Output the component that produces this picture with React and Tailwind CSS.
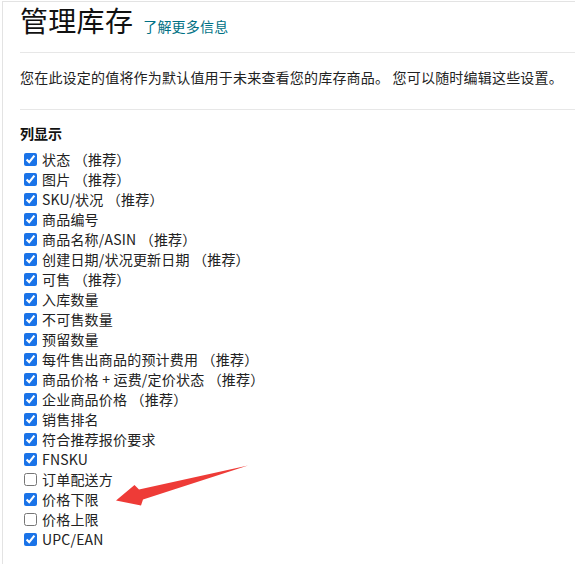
import React from 'react';

const columns = [
  { label: '状态 （推荐）', checked: true },
  { label: '图片 （推荐）', checked: true },
  { label: 'SKU/状况 （推荐）', checked: true },
  { label: '商品编号', checked: true },
  { label: '商品名称/ASIN （推荐）', checked: true },
  { label: '创建日期/状况更新日期 （推荐）', checked: true },
  { label: '可售 （推荐）', checked: true },
  { label: '入库数量', checked: true },
  { label: '不可售数量', checked: true },
  { label: '预留数量', checked: true },
  { label: '每件售出商品的预计费用 （推荐）', checked: true },
  { label: '商品价格 + 运费/定价状态 （推荐）', checked: true },
  { label: '企业商品价格 （推荐）', checked: true },
  { label: '销售排名', checked: true },
  { label: '符合推荐报价要求', checked: true },
  { label: 'FNSKU', checked: true },
  { label: '订单配送方', checked: false },
  { label: '价格下限', checked: true },
  { label: '价格上限', checked: false },
  { label: 'UPC/EAN', checked: true },
];

const Arrow = () => (
  <svg className="absolute left-0 top-0 pointer-events-none" width="575" height="564">
    <polygon
      points="113,498.5 131.5,483 136,487.5 245,463.5 140,497.5 138,503.5"
      fill="#ee3b37"
    />
  </svg>
);

export default function App() {
  return (
    <div className="min-h-[564px] bg-white font-['Noto_Sans_CJK_SC','Noto_Sans',sans-serif] text-[#111]">
      <div className="relative ml-[2px] mt-[1px] min-h-[563px] border-t border-l border-[#e3e3e3]">
        <div className="pl-[17px]">
          <div className="flex h-[50px] items-baseline gap-[10px]">
            <h1 className="text-[28px] leading-[36px] font-normal tracking-[0.3px]">管理库存</h1>
            <a href="#" className="text-[14px] text-[#007185] tracking-[0.2px]">了解更多信息</a>
          </div>
          <div className="border-t border-[#e7e7e7]" />
          <p className="mt-[14px] mb-[22px] text-[14px] leading-[20px] tracking-[0.2px] text-[#222]">
            您在此设定的值将作为默认值用于未来查看您的库存商品。 您可以随时编辑这些设置。
          </p>
          <div className="border-t border-[#e7e7e7]" />
          <h3 className="mt-[13px] text-[14px] leading-[20px] font-bold">列显示</h3>
          <ul className="mt-[6px]">
            {columns.map((col) => (
              <li key={col.label} className="flex h-[20px] items-center">
                <input
                  type="checkbox"
                  defaultChecked={col.checked}
                  className="ml-[4px] mr-[5px] h-[13px] w-[13px] accent-[#1a73e8]"
                />
                <span className="text-[14px] leading-[20px] tracking-[0.2px] text-[#222]">{col.label}</span>
              </li>
            ))}
          </ul>
        </div>
        <Arrow />
      </div>
    </div>
  );
}
